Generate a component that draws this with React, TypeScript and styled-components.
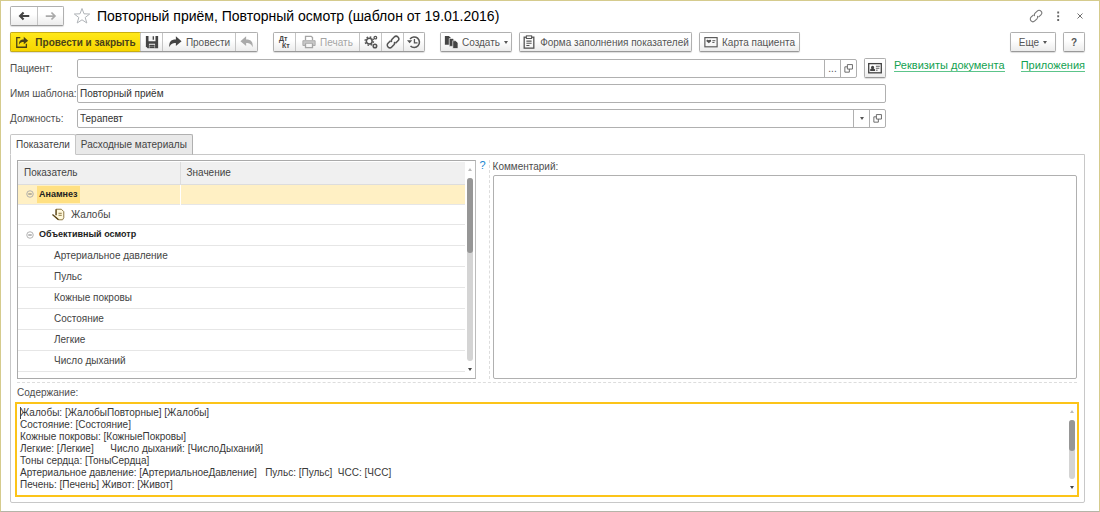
import React from "react";
import styled, { createGlobalStyle, css } from "styled-components";

const GlobalStyle = createGlobalStyle`
  *, *::before, *::after { box-sizing: border-box; }
  body { margin: 0; background: #fff; }
  body, button, input, select, textarea {
    font-family: "Liberation Sans", Arial, sans-serif;
    font-size: 10px;
    color: #444;
  }
`;

const line = "#b0b0b0";

const Window = styled.main`
  min-height: 100vh;
  border: 1px solid #d5cb8d;
  border-bottom-color: #b4b4a8;
  padding: 6px 14px 8px 9px;
  display: flex;
  flex-direction: column;
`;

const TitleBar = styled.header`
  display: flex;
  align-items: center;
  height: 18px;
  margin-right: -6px;
`;

const Title = styled.h1`
  flex: 1;
  margin: 0 0 0 5px;
  font-size: 14px;
  line-height: 18px;
  font-weight: 400;
  color: #000;
  white-space: nowrap;
`;

const Toolbar = styled.div`
  display: flex;
  margin-top: 7px;
  gap: 7px;
`;

const Group = styled.div<{ $after?: number }>`
  display: flex;
  border: 1px solid ${line};
  border-bottom-color: #999;
  border-radius: 2px;
  box-shadow: 0 1px 1px #ddd;
  margin-right: ${(p) => p.$after ?? 0}px;
`;

const Button = styled.button<{ $w?: number; $primary?: boolean; $faded?: boolean }>`
  display: flex;
  align-items: center;
  justify-content: center;
  gap: ${(p) => (p.$primary ? 6 : 4)}px;
  height: 18px;
  width: ${(p) => p.$w ?? 22}px;
  padding: 0;
  border: 0;
  background: linear-gradient(#fff 40%, #ececec);
  color: ${(p) => (p.$faded ? "#a5a5a5" : "#555")};
  white-space: nowrap;
  & + & { border-left: 1px solid #c4c4c4; }
  svg { flex: none; }
  ${(p) =>
    p.$primary &&
    css`
      background: linear-gradient(#ffe81a, #f7d600);
      color: #4a4218;
      font-weight: 700;
      box-shadow: 0 0 0 1px #c9ae10;
      border-radius: 1px;
    `}
`;

const Spacer = styled.div`
  flex: 1;
`;

const BareButton = styled.button<{ $w?: number }>`
  display: flex;
  align-items: center;
  justify-content: center;
  width: ${(p) => p.$w ?? 22}px;
  height: 18px;
  padding: 0;
  border: 0;
  background: none;
  color: #777;
`;

const Caret = styled.span`
  border: 2px solid transparent;
  border-top: 3px solid #555;
  border-bottom: 0;
`;

const Details = styled.section`
  display: flex;
  gap: 8px;
  margin-top: 6px;
`;

const Fields = styled.div`
  flex: 1;
  display: grid;
  gap: 6px;
`;

const Field = styled.div`
  display: flex;
  align-items: center;
`;

const Label = styled.label`
  width: 67px;
  flex: none;
  color: #4d4d4d;
  white-space: nowrap;
`;

const Box = styled.div`
  flex: 1;
  display: flex;
  height: 19px;
  border: 1px solid ${line};
  border-radius: 2px;
  background: #fff;
`;

const control = css`
  flex: 1;
  min-width: 0;
  border: 0;
  padding: 0 2px;
  background: none;
  outline: none;
  color: #333;
`;

const TextInput = styled.input`
  ${control}
`;

const Select = styled.select`
  ${control}
  appearance: none;
`;

const BoxButton = styled.button`
  display: flex;
  align-items: center;
  justify-content: center;
  width: 16px;
  padding: 0;
  border: 0;
  border-left: 1px solid ${line};
  background: none;
  color: #555;
`;

const CardGroup = styled(Group)`
  margin-left: 7px;
`;

const Links = styled.nav`
  display: flex;
  justify-content: space-between;
  width: 191px;
`;

const Link = styled.a`
  height: 14px;
  font-size: 11px;
  line-height: 14px;
  color: #12a150;
  text-decoration: none;
  border-bottom: 1px solid #5cc48a;
`;

const Tabs = styled.div`
  display: flex;
  margin-top: 6px;
`;

const Tab = styled.button<{ $active?: boolean }>`
  position: relative;
  z-index: ${(p) => (p.$active ? 1 : 0)};
  height: 21px;
  margin-bottom: -1px;
  padding: 0 5px;
  border: 1px solid ${(p) => (p.$active ? "#c6c6c6" : line)};
  border-bottom-color: ${(p) => (p.$active ? "#fff" : "#c6c6c6")};
  border-radius: 2px 2px 0 0;
  background: ${(p) => (p.$active ? "#fff" : "#e9e9e9")};
  & + & { margin-left: -1px; }
`;

const Panel = styled.section`
  flex: 1;
  display: flex;
  flex-direction: column;
  border: 1px solid #c8c8c8;
  border-radius: 0 0 2px 2px;
  padding: 5px 7px 5px 6px;
`;

const Split = styled.div`
  display: grid;
  grid-template-columns: 459fr 602fr;
`;

const TableFrame = styled.div`
  display: flex;
  height: 219px;
  border: 1px solid #aaa;
  border-right-color: #bbb;
  padding: 1px 0;
  overflow: hidden;
`;

const Table = styled.table`
  flex: 1;
  border-collapse: collapse;
  table-layout: fixed;
  height: max-content;
`;

const HeadCell = styled.th<{ $w?: string }>`
  width: ${(p) => p.$w ?? "auto"};
  height: 22px;
  padding: 0 6px;
  background: #f0f0f0;
  border-bottom: 1px solid #ddd;
  text-align: left;
  font-weight: 400;
  & + & { border-left: 1px solid #ddd; }
`;

const Row = styled.tr<{ $selected?: boolean; $short?: boolean }>`
  height: ${(p) => (p.$short ? 20 : 21)}px;
  background: ${(p) => (p.$selected ? "#fff0c4" : "#fff")};
  border-bottom: 1px solid #e6e6e6;
`;

const Cell = styled.td<{ $indent?: number; $divider?: boolean }>`
  padding: 0 0 0 ${(p) => p.$indent ?? 8}px;
  color: #444;
  ${(p) => p.$divider && "border-left: 1px solid #fff;"}
`;

const CellLine = styled.div<{ $gap?: number }>`
  display: flex;
  align-items: center;
  gap: ${(p) => p.$gap ?? 3}px;
`;

const GroupName = styled.strong<{ $selected?: boolean }>`
  padding: 0 2px;
  font-size: 9px;
  line-height: 17px;
  color: #222;
  background: ${(p) => (p.$selected ? "#ffe082" : "transparent")};
`;

const Scroll = styled.div`
  width: 10px;
  flex: none;
  display: flex;
  flex-direction: column;
  align-items: center;
  padding: 6px 0;
  gap: 7px;
`;

const Track = styled.div`
  flex: 1;
  width: 6px;
  border-radius: 3px;
  background: #d4d4d4;
`;

const Thumb = styled.div<{ $part: string }>`
  height: ${(p) => p.$part};
  border-radius: 3px;
  background: #969696;
`;

const Arrow = styled.i<{ $down?: boolean }>`
  border: 2px solid transparent;
  ${(p) =>
    p.$down
      ? "border-top: 3px solid #444; border-bottom: 0;"
      : "border-bottom: 3px solid #bbb; border-top: 0;"}
`;

const Side = styled.div`
  display: flex;
`;

const HelpLink = styled.a`
  width: 13px;
  padding-left: 4px;
  font-size: 11px;
  line-height: 11px;
  color: #1a86d0;
  text-decoration: none;
`;

const Comment = styled.div`
  flex: 1;
  display: flex;
  flex-direction: column;
  border-left: 1px dashed #ddd;
  padding-left: 3px;
`;

const AreaLabel = styled.label`
  line-height: 13px;
  color: #4d4d4d;
`;

const CommentArea = styled.textarea`
  flex: 1;
  margin-top: 2px;
  border: 1px solid ${line};
  border-radius: 2px;
  resize: none;
  outline: none;
`;

const Content = styled.div`
  flex: 1;
  display: flex;
  flex-direction: column;
  margin-top: 3px;
  border-top: 1px dashed #ddd;
  padding-top: 3px;
`;

const ContentBox = styled.div`
  position: relative;
  flex: 1;
  display: flex;
  margin: 3px -2px 0 -2px;
  border: 2px solid #fcc419;
`;

const ContentArea = styled.textarea`
  flex: 1;
  border: 0;
  padding: 3px 3px 0 3px;
  line-height: 12px;
  color: #383838;
  resize: none;
  outline: none;
  overflow: hidden;
`;

const TextCursor = styled.span`
  position: absolute;
  left: 3px;
  top: 3px;
  width: 1px;
  height: 12px;
  background: #444;
`;

type IconProps = { size?: number; children: React.ReactNode };
const Icon = ({ size = 14, children }: IconProps) => (
  <svg
    width={size}
    height={size}
    viewBox="0 0 16 16"
    fill="none"
    stroke="currentColor"
    strokeWidth="1.5"
    aria-hidden="true"
  >
    {children}
  </svg>
);

const BackIcon = () => (
  <Icon><path d="M14 8H4M7.5 4 3.5 8l4 4" strokeWidth="2.4" stroke="#444" /></Icon>
);
const ForwardIcon = () => (
  <Icon><path d="M2 8h10M8.5 4l4 4-4 4" strokeWidth="2" stroke="#aaa" /></Icon>
);
const StarIcon = () => (
  <svg width="18" height="18" viewBox="0 0 18 18" fill="#fff" stroke="#b0b4b8" aria-hidden="true">
    <path d="m9 1.5 2 5.3 5.7.2-4.5 3.5 1.6 5.5L9 12.800l-4.800 3.200 1.600-5.500L1.300 7l5.700-.2z" />
  </svg>
);
const PostCloseIcon = () => (
  <Icon>
    <path d="M6 3H2v11h11v-4" stroke="#4a4218" />
    <path d="M4.500 11C4.500 7 6 5 10 5V2l5 4.500-5 4V8C7.500 8 6 8.500 4.500 11z" fill="#4a4218" stroke="none" />
  </Icon>
);
const SaveIcon = () => (
  <Icon>
    <path d="M1 1h14v14H3l-2-2z" fill="#444" stroke="none" />
    <path d="M4 1h8v6H4zM4.500 10h7v5h-7z" fill="#f6f6f6" stroke="none" />
    <path d="M9.500 1.500v4M5 12h6M5 14h6" stroke="#444" />
  </Icon>
);
const PostIcon = () => (
  <Icon><path d="M1.500 14C1 8 3 5 9 5V1.500L15.500 7 9 12.500V9C5 9 3 10 1.500 14z" fill="#444" stroke="none" /></Icon>
);
const UndoIcon = () => (
  <Icon><path d="M14.500 14C15 8 13 5 7 5V1.500L.5 7 7 12.500V9c4 0 6 1 7.500 5z" fill="#aaa" stroke="none" /></Icon>
);
const LedgerIcon = () => (
  <svg width="14" height="14" viewBox="0 0 14 14" fill="#444" fontSize="7" fontWeight="700" aria-hidden="true">
    <text x="1" y="6">Дт</text>
    <text x="4" y="13">Кт</text>
  </svg>
);
const PrintIcon = () => (
  <Icon>
    <path d="M4 6V1.500h6.500L12 3v3" />
    <path d="M1 6.500h14V12h-3V9.500H4V12H1z" fill="#c8c8c8" strokeWidth="1" />
    <path d="M4 10v4.500h8V10" />
  </Icon>
);
const GearsIcon = () => (
  <Icon>
    <circle cx="6" cy="7" r="3.300" strokeWidth="1.800" />
    <circle cx="6" cy="7" r="4.800" strokeWidth="1.600" strokeDasharray="1.900 1.870" />
    <circle cx="13" cy="3" r="1.500" strokeWidth="1.400" />
    <circle cx="12.500" cy="12.500" r="2" strokeWidth="1.800" />
  </Icon>
);
const ChainIcon = ({ thin }: { thin?: boolean }) => (
  <Icon>
    <g transform="rotate(-45 8 8)" strokeWidth={thin ? 1.2 : 1.8}>
      <path d="M7 5H3a3 3 0 0 0 0 6h3.500a3 3 0 0 0 2.700-2" />
      <path d="M9 11h4a3 3 0 0 0 0-6H9.500a3 3 0 0 0-2.700 2" />
    </g>
  </Icon>
);
const HistoryIcon = () => (
  <Icon>
    <path d="M3.500 4.500A6 6 0 1 1 4 12.500" strokeWidth="1.800" />
    <path d="M0 6h6L3 9.500z" fill="currentColor" stroke="none" />
    <path d="M8.500 4.500V9H12" strokeWidth="1.500" />
  </Icon>
);
const CreateIcon = () => (
  <Icon>
    <path d="M1 1h4.500L8 3.500V11H1z" fill="#444" stroke="none" />
    <path d="M6 4h4l2.500 2.500V13H6z" fill="#444" stroke="#f8f8f8" strokeWidth=".8" />
    <path d="M10 6.500h3.500L16 9v6.500h-6z" fill="#444" stroke="#f8f8f8" strokeWidth=".8" />
  </Icon>
);
const ClipboardIcon = () => (
  <Icon>
    <rect x="2.500" y="2.500" width="11" height="12.500" />
    <rect x="5" y="1" width="6" height="3" fill="#fff" strokeWidth="1.200" />
    <path d="M5 7h6M5 9.500h6M5 12h3.500" strokeWidth="1.200" />
  </Icon>
);
const PatientCardIcon = () => (
  <Icon>
    <rect x="1" y="3" width="14" height="10.500" strokeWidth="1.300" />
    <path d="M5.500 9.500 2.800 7C2.500 5 5 5 5.500 6 6 5 8.500 5 8.200 7z" fill="currentColor" stroke="none" />
    <path d="M9.500 6.500H13M9.500 8.500H12" strokeWidth="1.100" />
  </Icon>
);
const ContactIcon = () => (
  <Icon>
    <rect x=".8" y="3" width="14.400" height="10.500" strokeWidth="1.500" stroke="#444" />
    <path d="M2.500 11.500V9.500L4 8.500a1.800 1.800 0 1 1 2.500 0L8 9.500v2z" fill="#444" stroke="none" />
    <path d="M9 6h4.500M9 8.300h4M9 10.500h2" strokeWidth="1.100" />
  </Icon>
);
const OpenIcon = () => (
  <Icon size={9}>
    <path d="M6 1h9v8H6z" />
    <path d="M6 5H1.500v9.500h8V9" />
  </Icon>
);
const MinusIcon = () => (
  <Icon size={8}>
    <circle cx="8" cy="8" r="6.500" stroke="#aaa" strokeWidth="1.800" />
    <path d="M4.500 8h7" stroke="#777" strokeWidth="2" />
  </Icon>
);
const NoteIcon = () => (
  <Icon size={13}>
    <path d="M5 1.500h6.500l3 3V12L13 14.500H8L4.500 11" fill="#fff8dc" stroke="#8a7440" strokeWidth="1.200" />
    <path d="M8 6.500h4M8 9h4" stroke="#8a7440" strokeWidth="1.200" />
    <path d="M.5 8 8 14.500M5 1.500V9" stroke="#5a4518" strokeWidth="1.800" />
  </Icon>
);
const DotsIcon = () => (
  <Icon size={12}>
    <path d="M7 2h2.500v2.500H7zM7 7h2.500v2.500H7zM7 12h2.500v2.500H7z" fill="#666" stroke="none" />
  </Icon>
);
const CloseIcon = () => (
  <Icon size={10}><path d="m4 4 8 8M12 4l-8 8" stroke="#666" /></Icon>
);

const indicators = [
  "Артериальное давление",
  "Пульс",
  "Кожные покровы",
  "Состояние",
  "Легкие",
  "Число дыханий",
];

const content = `Жалобы: [ЖалобыПовторные] [Жалобы]
Состояние: [Состояние]
Кожные покровы: [КожныеПокровы]
Легкие: [Легкие]      Число дыханий: [ЧислоДыханий]
Тоны сердца: [ТоныСердца]
Артериальное давление: [АртериальноеДавление]   Пульс: [Пульс]  ЧСС: [ЧСС]
Печень: [Печень] Живот: [Живот]`;

const ScrollBar = ({ part }: { part: string }) => (
  <Scroll aria-hidden="true">
    <Arrow />
    <Track><Thumb $part={part} /></Track>
    <Arrow $down />
  </Scroll>
);

export default function App() {
  return (
    <>
      <GlobalStyle />
      <Window>
        <TitleBar>
          <Group $after={8}>
            <Button $w={26} aria-label="Назад"><BackIcon /></Button>
            <Button $w={26} aria-label="Вперёд"><ForwardIcon /></Button>
          </Group>
          <BareButton $w={20} aria-label="В избранное"><StarIcon /></BareButton>
          <Title>Повторный приём, Повторный осмотр (шаблон от 19.01.2016)</Title>
          <BareButton aria-label="Ссылка"><ChainIcon thin /></BareButton>
          <BareButton aria-label="Меню"><DotsIcon /></BareButton>
          <BareButton aria-label="Закрыть"><CloseIcon /></BareButton>
        </TitleBar>

        <Toolbar>
          <Group $after={8}>
            <Button $w={129} $primary><PostCloseIcon />Провести и закрыть</Button>
            <Button aria-label="Записать"><SaveIcon /></Button>
            <Button $w={73}><PostIcon />Провести</Button>
            <Button aria-label="Отмена проведения"><UndoIcon /></Button>
          </Group>
          <Group $after={8}>
            <Button $w={21} aria-label="Проводки"><LedgerIcon /></Button>
            <Button $w={64} $faded><PrintIcon />Печать</Button>
            <Button aria-label="Настройки"><GearsIcon /></Button>
            <Button aria-label="Связанные документы"><ChainIcon /></Button>
            <Button $w={21} aria-label="История"><HistoryIcon /></Button>
          </Group>
          <Group><Button $w={70}><CreateIcon />Создать<Caret /></Button></Group>
          <Group><Button $w={171}><ClipboardIcon />Форма заполнения показателей</Button></Group>
          <Group><Button $w={99}><PatientCardIcon />Карта пациента</Button></Group>
          <Spacer />
          <Group><Button $w={44}>Еще<Caret /></Button></Group>
          <Group><Button $w={20}><b>?</b></Button></Group>
        </Toolbar>

        <Details>
          <Fields>
            <Field>
              <Label htmlFor="patient">Пациент:</Label>
              <Box>
                <TextInput id="patient" />
                <BoxButton aria-label="Выбрать">...</BoxButton>
                <BoxButton aria-label="Открыть"><OpenIcon /></BoxButton>
              </Box>
              <CardGroup><Button $w={20} aria-label="Карточка"><ContactIcon /></Button></CardGroup>
            </Field>
            <Field>
              <Label htmlFor="template">Имя шаблона:</Label>
              <Box><TextInput id="template" defaultValue="Повторный приём" /></Box>
            </Field>
            <Field>
              <Label htmlFor="position">Должность:</Label>
              <Box>
                <Select id="position"><option>Терапевт</option></Select>
                <BoxButton aria-label="Список"><Caret /></BoxButton>
                <BoxButton aria-label="Открыть должность"><OpenIcon /></BoxButton>
              </Box>
            </Field>
          </Fields>
          <Links>
            <Link href="#details">Реквизиты документа</Link>
            <Link href="#attachments">Приложения</Link>
          </Links>
        </Details>

        <Tabs role="tablist">
          <Tab role="tab" aria-selected="true" $active>Показатели</Tab>
          <Tab role="tab" aria-selected="false">Расходные материалы</Tab>
        </Tabs>
        <Panel>
          <Split>
            <TableFrame>
              <Table>
                <thead>
                  <tr><HeadCell $w="162px">Показатель</HeadCell><HeadCell>Значение</HeadCell></tr>
                </thead>
                <tbody>
                  <Row $short $selected>
                    <Cell><CellLine><MinusIcon /><GroupName $selected>Анамнез</GroupName></CellLine></Cell>
                    <Cell $divider />
                  </Row>
                  <Row $short>
                    <Cell $indent={34}><CellLine $gap={6}><NoteIcon />Жалобы</CellLine></Cell>
                    <Cell />
                  </Row>
                  <Row>
                    <Cell><CellLine><MinusIcon /><GroupName>Объективный осмотр</GroupName></CellLine></Cell>
                    <Cell />
                  </Row>
                  {indicators.map((name) => (
                    <Row key={name}><Cell $indent={36}>{name}</Cell><Cell /></Row>
                  ))}
                </tbody>
              </Table>
              <ScrollBar part="41%" />
            </TableFrame>
            <Side>
              <HelpLink href="#help">?</HelpLink>
              <Comment>
                <AreaLabel htmlFor="comment">Комментарий:</AreaLabel>
                <CommentArea id="comment" />
              </Comment>
            </Side>
          </Split>
          <Content>
            <AreaLabel htmlFor="content">Содержание:</AreaLabel>
            <ContentBox>
              <ContentArea id="content" defaultValue={content} />
              <TextCursor />
              <ScrollBar part="53%" />
            </ContentBox>
          </Content>
        </Panel>
      </Window>
    </>
  );
}
